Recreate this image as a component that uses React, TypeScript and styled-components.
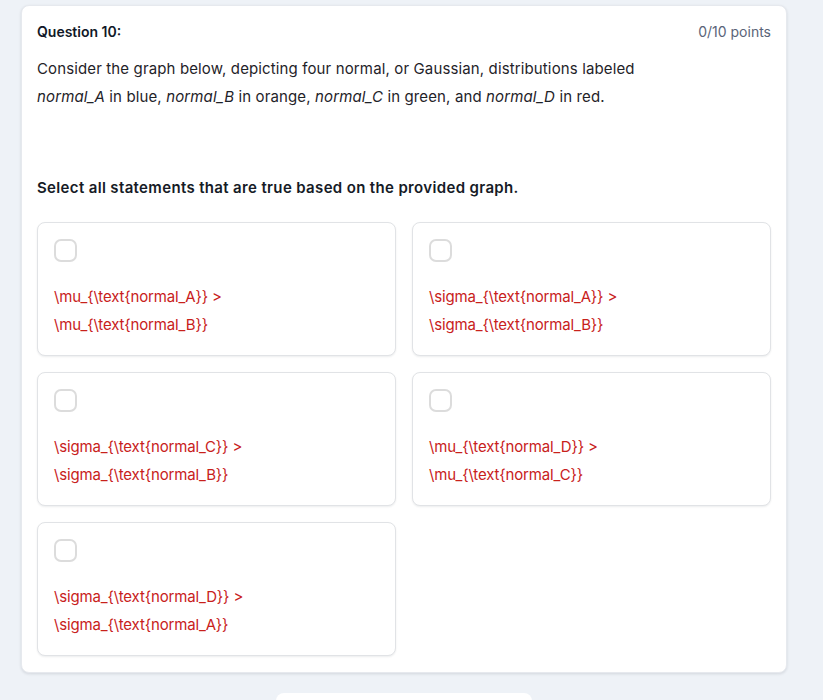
import React from "react";
import styled, { createGlobalStyle } from "styled-components";

const Global = createGlobalStyle`
  html, body { margin: 0; padding: 0; background: #eef2f7; }
  body { font-family: Inter, "Noto Sans", "Liberation Sans", sans-serif; -webkit-font-smoothing: antialiased; }
  * { box-sizing: border-box; }
`;

const Page = styled.div`
  padding: 5px 0 0 21px;
  width: 787px;
  display: flex;
  flex-direction: column;
  align-items: center;
`;

const Card = styled.section`
  width: 766px;
  background: #ffffff;
  border: 1px solid #e6e9ee;
  border-radius: 8px;
  box-shadow: 0 1px 3px rgba(15, 23, 42, 0.12);
  padding: 16px 15px 16px 15px;
  display: flex;
  flex-direction: column;
`;

const Header = styled.div`
  display: flex;
  justify-content: space-between;
  align-items: center;
  height: 20px;
`;

const Title = styled.h2`
  margin: 0;
  font-size: 14px;
  font-weight: 600;
  color: #111827;
  line-height: 20px;
`;

const Points = styled.span`
  font-size: 14px;
  color: #5a6478;
  line-height: 20px;
`;

const Prompt = styled.p`
  margin: 13px 0 0 0;
  font-size: 15px;
  line-height: 28px;
  letter-spacing: 0.13px;
  color: #1f2329;
`;

const Instruction = styled.h3`
  margin: 65px 0 0 0;
  font-size: 15px;
  font-weight: 600;
  letter-spacing: 0.35px;
  line-height: 24px;
  color: #161b26;
`;

const Options = styled.div`
  margin-top: 22px;
  display: grid;
  grid-template-columns: 1fr 1fr;
  column-gap: 16px;
  row-gap: 16px;
`;

const Option = styled.label`
  display: flex;
  flex-direction: column;
  border: 1px solid #e1e3e6;
  border-radius: 8px;
  box-shadow: 0 1px 2px rgba(15, 23, 42, 0.08);
  padding: 16px 16px 16px 16px;
  background: #fff;
  cursor: pointer;
`;

const Box = styled.span`
  width: 23px;
  height: 23px;
  border: 2px solid #dcdcdc;
  border-radius: 7px;
  background: #fff;
`;

const Statement = styled.div`
  margin-top: 21px;
  font-size: 15px;
  line-height: 28px;
  letter-spacing: -0.15px;
  color: #c8211b;
`;

const Footer = styled.div`
  margin-top: 20px;
  width: 256px;
  height: 40px;
  background: #fff;
  border-radius: 8px;
`;

const options = [
  ["\\mu_{\\text{normal_A}} >", "\\mu_{\\text{normal_B}}"],
  ["\\sigma_{\\text{normal_A}} >", "\\sigma_{\\text{normal_B}}"],
  ["\\sigma_{\\text{normal_C}} >", "\\sigma_{\\text{normal_B}}"],
  ["\\mu_{\\text{normal_D}} >", "\\mu_{\\text{normal_C}}"],
  ["\\sigma_{\\text{normal_D}} >", "\\sigma_{\\text{normal_A}}"],
];

export default function App() {
  return (
    <>
      <Global />
      <Page>
        <Card>
          <Header>
            <Title>Question 10:</Title>
            <Points>0/10 points</Points>
          </Header>
          <Prompt>
            Consider the graph below, depicting four normal, or Gaussian, distributions labeled
            <br />
            <em>normal_A</em> in blue, <em>normal_B</em> in orange, <em>normal_C</em> in green, and{" "}
            <em>normal_D</em> in red.
          </Prompt>
          <Instruction>Select all statements that are true based on the provided graph.</Instruction>
          <Options>
            {options.map((o, i) => (
              <Option key={i}>
                <Box />
                <Statement>
                  {o[0]}
                  <br />
                  {o[1]}
                </Statement>
              </Option>
            ))}
          </Options>
        </Card>
        <Footer />
      </Page>
    </>
  );
}
